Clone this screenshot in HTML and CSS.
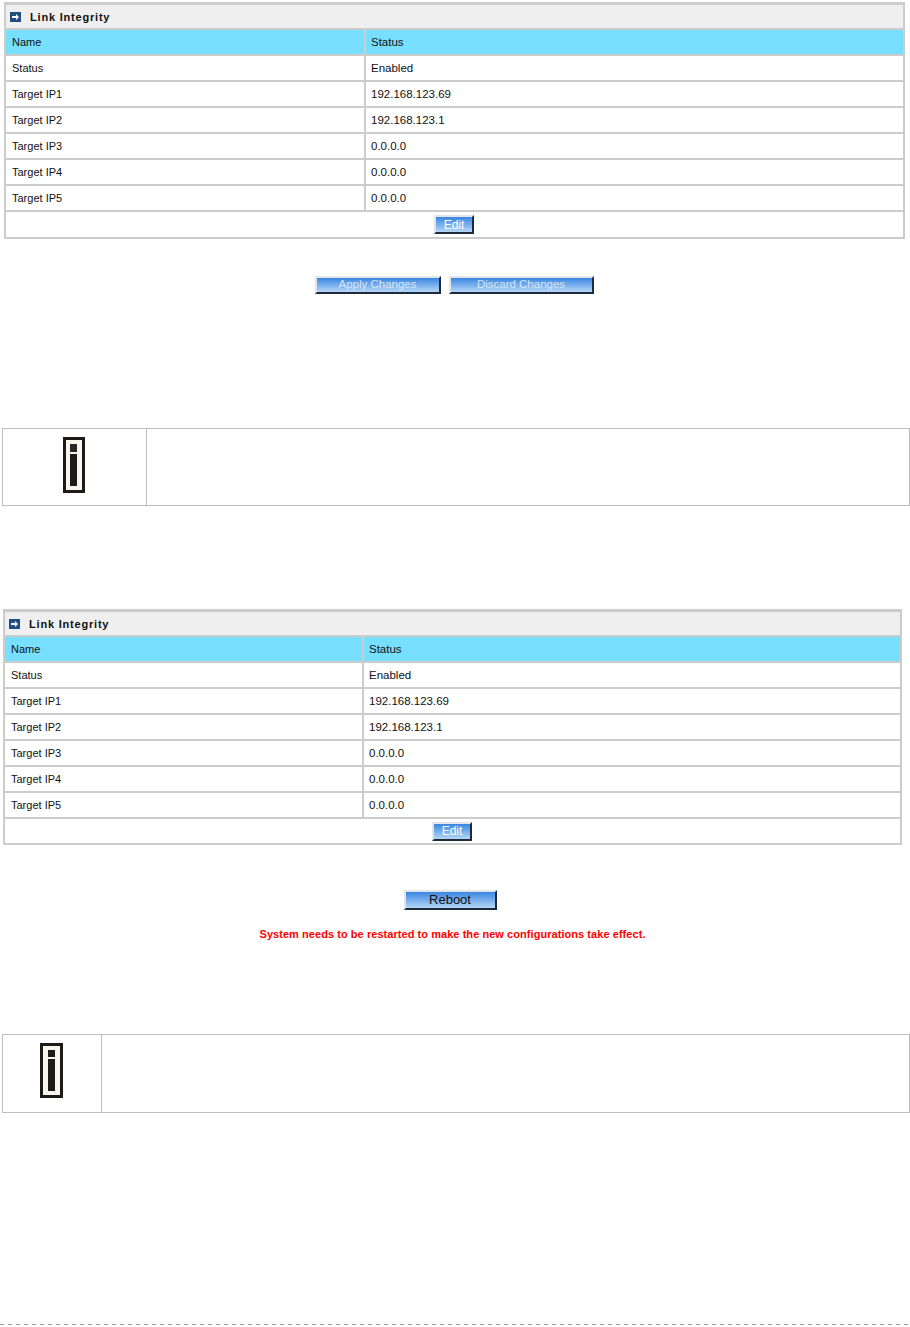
FILE: index.html
```html
<!DOCTYPE html>
<html lang="en">
<head>
<meta charset="utf-8">
<title>Link Integrity</title>
<link rel="stylesheet" href="styles.css">
</head>
<body>
<section class="panel panel-a">
  <div class="title"><svg class="arrow" width="11" height="10" viewBox="0 0 11 10"><rect width="11" height="10" fill="#1f4f80"/><path d="M2 4h4V2l3 3-3 3V6H2z" fill="#fff"/></svg><span>Link Integrity</span></div>
  <div class="row head"><div class="name">Name</div><div class="val">Status</div></div>
  <div class="row"><div class="name">Status</div><div class="val">Enabled</div></div>
  <div class="row"><div class="name">Target IP1</div><div class="val">192.168.123.69</div></div>
  <div class="row"><div class="name">Target IP2</div><div class="val">192.168.123.1</div></div>
  <div class="row"><div class="name">Target IP3</div><div class="val">0.0.0.0</div></div>
  <div class="row"><div class="name">Target IP4</div><div class="val">0.0.0.0</div></div>
  <div class="row"><div class="name">Target IP5</div><div class="val">0.0.0.0</div></div>
  <div class="actions"><button class="btn btn-edit">Edit</button></div>
</section>
<div class="apply-row">
  <button class="btn btn-apply">Apply Changes</button>
  <button class="btn btn-discard">Discard Changes</button>
</div>
<div class="note note-a">
  <div class="note-icon"><svg width="22" height="56" viewBox="0 0 22 56"><rect x="1.5" y="1.5" width="19" height="53" fill="#f8f6ee" stroke="#1e1a18" stroke-width="3"/><rect x="7" y="7" width="7" height="8" fill="#2a2624"/><rect x="7" y="17" width="7" height="32" fill="#1e1a18"/></svg></div>
  <div class="note-body"></div>
</div>
<section class="panel panel-b">
  <div class="title"><svg class="arrow" width="11" height="10" viewBox="0 0 11 10"><rect width="11" height="10" fill="#1f4f80"/><path d="M2 4h4V2l3 3-3 3V6H2z" fill="#fff"/></svg><span>Link Integrity</span></div>
  <div class="row head"><div class="name">Name</div><div class="val">Status</div></div>
  <div class="row"><div class="name">Status</div><div class="val">Enabled</div></div>
  <div class="row"><div class="name">Target IP1</div><div class="val">192.168.123.69</div></div>
  <div class="row"><div class="name">Target IP2</div><div class="val">192.168.123.1</div></div>
  <div class="row"><div class="name">Target IP3</div><div class="val">0.0.0.0</div></div>
  <div class="row"><div class="name">Target IP4</div><div class="val">0.0.0.0</div></div>
  <div class="row"><div class="name">Target IP5</div><div class="val">0.0.0.0</div></div>
  <div class="actions"><button class="btn btn-edit">Edit</button></div>
</section>
<div class="reboot-row"><button class="btn btn-reboot">Reboot</button></div>
<p class="warning">System needs to be restarted to make the new configurations take effect.</p>
<div class="note note-b">
  <div class="note-icon"><svg width="23" height="55" viewBox="0 0 23 55"><rect x="1.5" y="1.5" width="20" height="52" fill="#f8f6ee" stroke="#1e1a18" stroke-width="3"/><rect x="8" y="7" width="7" height="7" fill="#1e1a18"/><rect x="8" y="16" width="7" height="32" fill="#1e1a18"/></svg></div>
  <div class="note-body"></div>
</div>
<div class="footer-rule"></div>
</body>
</html>
```
FILE: styles.css
```css
* { box-sizing: border-box; }
html, body { margin: 0; padding: 0; background: #fff; }
body {
  width: 910px;
  height: 1327px;
  overflow: hidden;
  font-family: "Liberation Sans", Arial, sans-serif;
  font-size: 11px;
  color: #111;
  display: flow-root;
}
.panel {
  border: 2px solid #ccc;
  border-top-width: 3px;
  background: #fff;
}
.panel-a { width: 901px; margin: 2px 0 0 4px; }
.panel-b { width: 899px; margin: 103px 0 0 3px; }
.title {
  height: 23px;
  background: #efefef;
  display: flex;
  align-items: center;
  padding-left: 4px;
  font-weight: bold;
  font-size: 11px;
  letter-spacing: 0.8px;
  color: #111;
}
.arrow { margin-right: 9px; flex: none; }
.row {
  display: flex;
  height: 26px;
  border-top: 2px solid #ccc;
}
.row.head { background: #77dfff; }
.name, .val {
  display: flex;
  align-items: center;
  line-height: 24px;
}
.name {
  width: 360px;
  padding-left: 6px;
  border-right: 2px solid #ccc;
  flex: none;
  font-size: 11px;
}
.panel-b .name { width: 359px; }
.val { padding-left: 5px; flex: 1; font-size: 11.5px; }
.actions {
  height: 26px;
  border-top: 2px solid #ccc;
  display: flex;
  align-items: center;
  justify-content: center;
  padding-right: 1px;
}
.panel-a .actions { height: 27px; }
.btn {
  display: block;
  margin: 0;
  padding: 0;
  font-family: "Liberation Sans", Arial, sans-serif;
  background: linear-gradient(#3a86e2, #b6d6f6);
  border: 2px solid;
  border-color: #e2e6ea #1c2a3a #1c2a3a #e2e6ea;
  color: #fff;
  font-size: 12px;
  line-height: 1;
}
.btn-edit { width: 40px; height: 19px; }
.btn-apply { width: 126px; height: 18px; color: #d6e6f8; font-size: 11.5px; }
.btn-discard { width: 145px; height: 18px; color: #d6e6f8; font-size: 11.5px; }
.btn-reboot { width: 93px; height: 20px; color: #111; font-size: 13px; padding-bottom: 2px; }
.apply-row {
  display: flex;
  justify-content: center;
  gap: 8px;
  margin-top: 37px;
  padding-right: 2px;
}
.note {
  margin-left: 2px;
  width: 908px;
  border: 1px solid #bdbdbd;
  display: flex;
}
.note-a { height: 78px; margin-top: 134px; }
.note-b { height: 79px; margin-top: 93px; }
.note-icon {
  flex: none;
  display: flex;
  justify-content: center;
  align-items: flex-start;
  padding-top: 8px;
  padding-right: 2px;
  border-right: 1px solid #bdbdbd;
}
.note-a .note-icon { width: 144px; }
.note-b .note-icon { width: 99px; }
.note-body { flex: 1; }
.reboot-row {
  display: flex;
  justify-content: center;
  margin-top: 45px;
  padding-right: 10px;
}
.warning {
  margin: 17px 0 0;
  width: 905px;
  text-align: center;
  color: #f00;
  font-weight: bold;
  font-size: 11px;
  letter-spacing: 0.055px;
  line-height: 14px;
}
.footer-rule {
  height: 1px;
  margin-top: 211px;
  background: repeating-linear-gradient(90deg, #999 0 4px, transparent 4px 8px);
}
```
